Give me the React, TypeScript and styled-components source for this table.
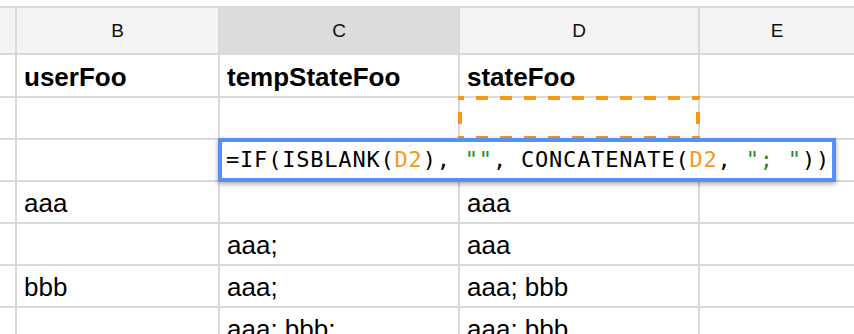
import React from 'react';
import styled, { createGlobalStyle } from 'styled-components';

const GlobalStyle = createGlobalStyle`
  html, body {
    margin: 0;
    padding: 0;
    background: #ffffff;
    overflow: hidden;
  }
  body {
    font-family: "Liberation Sans", Arial, sans-serif;
  }
`;

const columns = ['B', 'C', 'D', 'E'];

// each row: B, C, D, E
const rows: string[][] = [
  ['userFoo', 'tempStateFoo', 'stateFoo', ''],
  ['', '', '', ''],
  ['', '', '', ''],
  ['aaa', '', 'aaa', ''],
  ['', 'aaa;', 'aaa', ''],
  ['bbb', 'aaa;', 'aaa; bbb', ''],
  ['', 'aaa; bbb;', 'aaa; bbb', ''],
];

const formula: { text: string, kind?: 'ref' | 'str' }[] = [
  { text: '=IF(ISBLANK(' },
  { text: 'D2', kind: 'ref' },
  { text: '), ' },
  { text: '""', kind: 'str' },
  { text: ', CONCATENATE(' },
  { text: 'D2', kind: 'ref' },
  { text: ', ' },
  { text: '"; "', kind: 'str' },
  { text: '))' },
];

const Sheet = styled.div`
  margin-top: 6px;
  padding-top: 2px;
  display: grid;
  grid-template-columns: 15px 201px 238px 238px 1fr;
  grid-template-rows: 45px 41px repeat(6, 40px);
  gap: 2px;
  background: #d9d9d9;
  height: 330px;
`;

const HeaderCell = styled.div<{ $selected?: boolean }>`
  background: ${p => (p.$selected ? '#dcdcdc' : '#f3f3f3')};
  display: flex;
  align-items: center;
  justify-content: center;
  font-size: 19px;
  color: #111111;
`;

const Cell = styled.div<{ $bold?: boolean }>`
  position: relative;
  background: #ffffff;
  display: flex;
  align-items: flex-end;
  padding: 0 7px 6px 7px;
  font-size: 26px;
  line-height: 26px;
  font-weight: ${p => (p.$bold ? 700 : 400)};
  color: #000000;
  white-space: nowrap;
`;

const RangeMark = styled.div`
  position: absolute;
  left: -2px;
  top: -2px;
  width: 242px;
  height: 44px;
  z-index: 1;
  pointer-events: none;
  background:
    linear-gradient(to right, #f7981d 12px, transparent 12px) -6px 0 / 24px 4px repeat-x,
    linear-gradient(to right, #f7981d 12px, transparent 12px) -6px 100% / 24px 4px repeat-x,
    linear-gradient(to bottom, #f7981d 12px, transparent 12px) 0 16px / 4px 24px repeat-y,
    linear-gradient(to bottom, #f7981d 12px, transparent 12px) 100% 16px / 4px 24px repeat-y;
`;

const Editor = styled.div`
  position: absolute;
  left: -2px;
  top: -2px;
  width: 618px;
  height: 44px;
  box-sizing: border-box;
  z-index: 2;
  border: 4px solid #5591f5;
  background: #ffffff;
  box-shadow: 0 2px 5px rgba(0, 0, 0, 0.35);
  padding-left: 4px;
  display: flex;
  align-items: center;
  font-family: "DejaVu Sans Mono", "Liberation Mono", monospace;
  font-size: 22px;
  letter-spacing: 0.8px;
  line-height: 36px;
  color: #000000;
  white-space: pre;
`;

const Token = styled.span<{ $kind?: 'ref' | 'str' }>`
  color: ${p => (p.$kind === 'ref' ? '#f7981d' : p.$kind === 'str' ? '#1e8e1e' : '#000000')};
`;

export default function App() {
  return (
    <>
      <GlobalStyle />
      <Sheet>
        <HeaderCell />
        {columns.map(c => (
          <HeaderCell key={c} $selected={c === 'C'}>{c}</HeaderCell>
        ))}
        {rows.map((row, r) => (
          <React.Fragment key={r}>
            <Cell />
            {row.map((value, c) => (
              <Cell key={c} $bold={r === 0}>
                {value}
                {r === 1 && c === 2 && <RangeMark />}
                {r === 2 && c === 1 && (
                  <Editor>
                    {formula.map((t, i) => (
                      <Token key={i} $kind={t.kind}>{t.text}</Token>
                    ))}
                  </Editor>
                )}
              </Cell>
            ))}
          </React.Fragment>
        ))}
      </Sheet>
    </>
  );
}
